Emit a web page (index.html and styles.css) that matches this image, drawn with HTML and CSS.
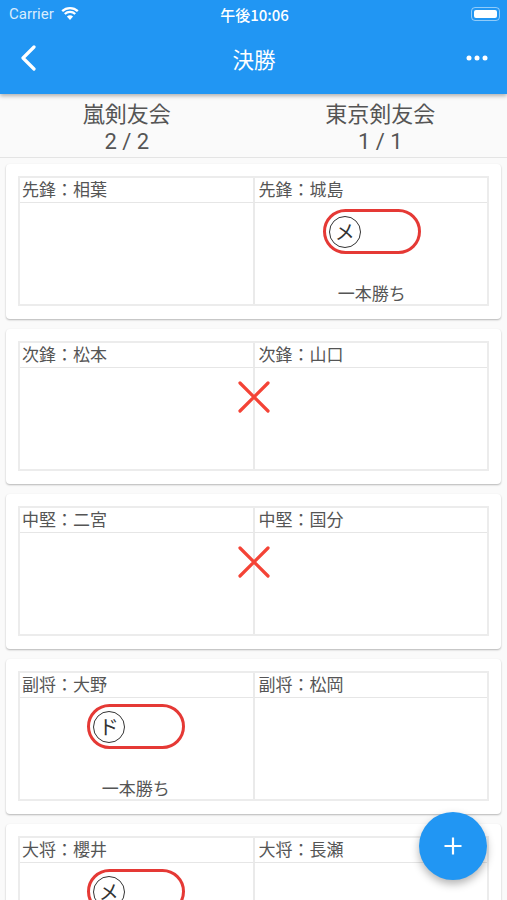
FILE: index.html
```html
<!DOCTYPE html>
<html lang="ja">
<head>
    <meta charset="UTF-8">
    <meta name="viewport" content="width=device-width, initial-scale=1.0">
    <title>決勝</title>
    <link rel="stylesheet" href="styles.css">
</head>
<body>
    <header class="app-bar">
        <div class="status-bar">
            <div class="carrier">
                <span>Carrier</span>
                <svg class="wifi" width="18" height="14" viewBox="0 0 18 14">
                    <path d="M9 14 5.900 10.600a4.500 4.500 0 0 1 6.200 0z" fill="#fff"/>
                    <path d="M1.200 5.200a11.300 11.300 0 0 1 15.600 0M3.800 8a7.500 7.500 0 0 1 10.400 0" fill="none" stroke="#fff" stroke-width="2.300"/>
                </svg>
            </div>
            <span class="clock">午後10:06</span>
            <div class="battery"><i></i></div>
        </div>
        <div class="toolbar">
            <svg class="back" width="18" height="26" viewBox="0 0 18 26">
                <path d="M14 2 3 13l11 11" fill="none" stroke="#fff" stroke-width="3.200" stroke-linecap="round" stroke-linejoin="round"/>
            </svg>
            <h1>決勝</h1>
            <svg class="more" width="22" height="6" viewBox="0 0 22 6">
                <circle cx="3" cy="3" r="2.500" fill="#fff"/>
                <circle cx="11" cy="3" r="2.500" fill="#fff"/>
                <circle cx="19" cy="3" r="2.500" fill="#fff"/>
            </svg>
        </div>
    </header>

    <section class="score">
        <div class="team"><div>嵐剣友会</div><div class="points">2 / 2</div></div>
        <div class="team"><div>東京剣友会</div><div class="points">1 / 1</div></div>
    </section>

    <main>
        <div class="card">
            <div class="match">
                <div class="player">先鋒：相葉</div>
                <div class="player">先鋒：城島</div>
                <div class="result"></div>
                <div class="result">
                    <div class="pill"><span class="mark">メ</span></div>
                    <div class="win">一本勝ち</div>
                </div>
            </div>
        </div>

        <div class="card">
            <div class="match">
                <div class="player">次鋒：松本</div>
                <div class="player">次鋒：山口</div>
                <div class="result"></div>
                <div class="result"></div>
                <svg class="draw" width="32" height="32" viewBox="0 0 32 32">
                    <path d="M2 2l28 28M30 2 2 30" stroke="#f44336" stroke-width="3.200" stroke-linecap="round"/>
                </svg>
            </div>
        </div>

        <div class="card">
            <div class="match">
                <div class="player">中堅：二宮</div>
                <div class="player">中堅：国分</div>
                <div class="result"></div>
                <div class="result"></div>
                <svg class="draw" width="32" height="32" viewBox="0 0 32 32">
                    <path d="M2 2l28 28M30 2 2 30" stroke="#f44336" stroke-width="3.200" stroke-linecap="round"/>
                </svg>
            </div>
        </div>

        <div class="card">
            <div class="match">
                <div class="player">副将：大野</div>
                <div class="player">副将：松岡</div>
                <div class="result">
                    <div class="pill"><span class="mark">ド</span></div>
                    <div class="win">一本勝ち</div>
                </div>
                <div class="result"></div>
            </div>
        </div>

        <div class="card">
            <div class="match">
                <div class="player">大将：櫻井</div>
                <div class="player">大将：長瀬</div>
                <div class="result">
                    <div class="pill"><span class="mark">メ</span></div>
                </div>
                <div class="result"></div>
            </div>
        </div>
    </main>

    <button class="fab">
        <svg width="20" height="20" viewBox="0 0 20 20">
            <path d="M10 1.500v17M1.500 10h17" stroke="#fff" stroke-width="2.200"/>
        </svg>
    </button>
</body>
</html>
```

FILE: styles.css
```css
body {
    font-family: "Noto Sans CJK JP", Roboto, sans-serif;
    background-color: #fafafa;
    color: #555;
    height: 900px;
    margin: 0;
    overflow: hidden;
    position: relative;
}

.app-bar {
    background-color: #2196f3;
    color: #fff;
    height: 94px;
    box-shadow: 0 2px 4px rgba(0, 0, 0, 0.3);
    position: relative;
}

.status-bar {
    display: grid;
    grid-template-columns: 1fr auto 1fr;
    align-items: center;
    height: 28px;
    padding: 0 7px 0 9px;
}

.carrier {
    display: flex;
    align-items: center;
    gap: 7px;
    font-family: Roboto, sans-serif;
    font-size: 15px;
    color: #d8ecfd;
}

.wifi {
    margin-top: -3px;
}

.clock {
    font-size: 15px;
    font-weight: 500;
}

.battery {
    justify-self: end;
    width: 29px;
    height: 14px;
    box-sizing: border-box;
    padding: 2px;
    border: 1px solid rgba(255, 255, 255, 0.5);
    border-radius: 4px;
}

.battery i {
    display: block;
    height: 100%;
    background-color: #fff;
    border-radius: 2px;
}

.toolbar {
    display: grid;
    grid-template-columns: 1fr auto 1fr;
    align-items: center;
    height: 64px;
    padding: 0 19px 4px 20px;
    box-sizing: border-box;
}

.toolbar h1 {
    margin: 0;
    font-size: 21.500px;
    font-weight: 400;
}

.more {
    justify-self: end;
}

.score {
    display: grid;
    grid-template-columns: 1fr 1fr;
    height: 60px;
    padding-top: 3px;
    border-bottom: 1px solid #e4e4e4;
    text-align: center;
    font-size: 22px;
    line-height: 30px;
}

.points {
    font-family: Roboto, sans-serif;
    font-size: 22px;
}

.card {
    background-color: #fff;
    margin: 6px 6px 10px;
    padding: 12px 12px 13px;
    height: 130px;
    border-radius: 4px;
    box-shadow: 0 1px 2px rgba(0, 0, 0, 0.28);
}

.match {
    display: grid;
    grid-template-columns: 1fr 1fr;
    grid-template-rows: 27px 103px;
    position: relative;
    outline: 2px solid #ececec;
    outline-offset: -2px;
}

.player {
    font-size: 17px;
    line-height: 25px;
    padding-left: 4px;
    border-bottom: 1px solid #e6e6e6;
    overflow: hidden;
    white-space: nowrap;
}

.result {
    display: flex;
    flex-direction: column;
    align-items: center;
    padding-top: 6px;
    box-sizing: border-box;
}

.player:nth-child(2),
.result:nth-child(4) {
    border-left: 2px solid #eaeaea;
    margin-left: -1px;
}

.pill {
    display: flex;
    align-items: center;
    box-sizing: border-box;
    width: 98px;
    height: 45px;
    padding-left: 3px;
    border: 3px solid #e53935;
    border-radius: 23px;
}

.mark {
    display: flex;
    justify-content: center;
    align-items: center;
    box-sizing: border-box;
    width: 32px;
    height: 32px;
    border: 1.300px solid #333;
    border-radius: 50%;
    font-size: 20px;
    line-height: 1;
    color: #333;
}

.win {
    margin-top: 27px;
    font-size: 17px;
    line-height: 24px;
}

.draw {
    position: absolute;
    left: 50%;
    top: 40px;
    margin-left: -16px;
}

.fab {
    position: absolute;
    left: 419px;
    top: 812px;
    width: 68px;
    height: 68px;
    padding: 0;
    display: flex;
    justify-content: center;
    align-items: center;
    border: none;
    border-radius: 50%;
    background-color: #2196f3;
    box-shadow: 0 4px 8px rgba(0, 0, 0, 0.3);
}
```
